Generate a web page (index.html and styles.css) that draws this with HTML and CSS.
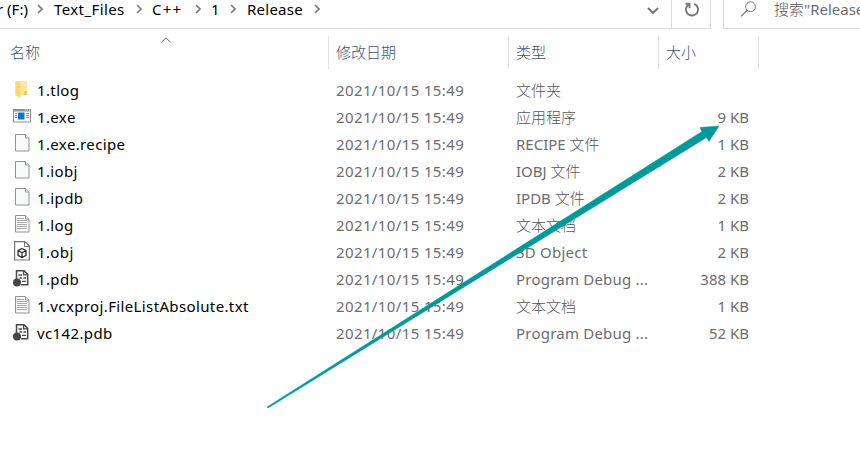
FILE: index.html
```
<!DOCTYPE html>
<html lang="zh-CN">
<head>
<meta charset="utf-8">
<title>Release</title>
<link rel="stylesheet" href="styles.css">
</head>
<body>
<svg class="defs" width="0" height="0">
  <symbol id="sep" viewBox="0 0 6 10"><path d="M1 1l4 4-4 4" fill="none" stroke="#7a7a7a" stroke-width="1.6"/></symbol>
  <symbol id="folder" viewBox="0 0 18 20"><path d="M2.500 2H11l3 1v13H2.500z" fill="#ffe79a"/><path d="M11 12.500h3V16h-3z" fill="#f0c75c"/><path d="M2.500 2l5 2v15l-5-2.500z" fill="#f9d875"/></symbol>
  <symbol id="exe" viewBox="0 0 18 20"><path d="M.5 3.500h17v12.500H.5z" fill="#fff" stroke="#8b8f92"/><path d="M0 3h18v2.500H0z" fill="#8b8f92"/><path d="M12 4h1m1 0h1m1 0h1" stroke="#fff"/><path d="M5 6.500h6.500v7H5z" fill="#0c74d4"/><path d="M2 7.500h2M2 9.500h2M2 11.500h2M13 7.500h3M13 9.500h3M13 11.500h3" stroke="#858b90"/></symbol>
  <symbol id="file" viewBox="0 0 18 20"><path d="M2.500 1.500h10l3.500 3.500v13H2.500z" fill="#f8f9f9" stroke="#929292"/><path d="M12.500 1.500V5H16" fill="#fff" stroke="#929292"/></symbol>
  <symbol id="text" viewBox="0 0 18 20"><path d="M2.500 1.500h10l3.500 3.500v13H2.500z" fill="#fafafa" stroke="#929292"/><path d="M12.500 1.500V5H16" fill="#fff" stroke="#929292"/><path d="M4 4.500h7M4 6.500h10M4 8.500h10M4 10.500h10M4 12.500h10M4 14.500h10" stroke="#aaa"/></symbol>
  <symbol id="obj" viewBox="0 0 18 20"><path d="M1.600.6h10.200L16.400 5v14H1.600z" fill="#fff" stroke="#757575" stroke-width="1.200"/><path d="M11.500.6V5.500h5" fill="none" stroke="#757575"/><path d="M9 7.500l4 2.200v4.600l-4 2.200-4-2.200V9.700zM5 9.700l4 2.100 4-2.100M9 11.800v4.700" fill="none" stroke="#303030" stroke-width="1.300"/></symbol>
  <symbol id="pdb" viewBox="0 0 18 20"><g transform="translate(0 1)"><path d="M3.500 10V1.700h7.500l3.700 3.700v10.400H8" fill="#fff" stroke="#484848" stroke-width="1.500"/><path d="M10.600 1.500v4.300h4" fill="none" stroke="#484848" stroke-width="1.300"/><path d="M5.500 6h3.500M6.500 9h2.500M10.500 9h2.500M9 12.300h4" stroke="#484848" stroke-width="1.300"/><circle cx="4" cy="13.500" r="4" fill="#454545"/></g></symbol>
</svg>

<header class="toolbar">
  <nav class="address">
    <span class="crumb drive">r (F:)</span><svg class="sep"><use href="#sep"/></svg>
    <span class="crumb folder">Text_Files</span><svg class="sep"><use href="#sep"/></svg>
    <span class="crumb lang">C++</span><svg class="sep"><use href="#sep"/></svg>
    <span class="crumb one">1</span><svg class="sep"><use href="#sep"/></svg>
    <span class="crumb release">Release</span><svg class="sep"><use href="#sep"/></svg>
    <svg class="drop" width="12" height="8" viewBox="0 0 12 8"><path d="M1 1l5 5 5-5" fill="none" stroke="#747474" stroke-width="1.900"/></svg>
  </nav>
  <div class="refresh"><svg width="16" height="16" viewBox="0 0 16 16"><path d="M10.300 1.800A6.100 6.100 0 1 1 4.500 2.500" fill="none" stroke="#757575" stroke-width="1.900"/><path d="M1.500 1.800h4v4.400" fill="none" stroke="#757575" stroke-width="1.900"/></svg></div>
  <div class="search"><svg width="17" height="16" viewBox="0 0 17 16"><circle cx="10.500" cy="5.700" r="4.900" fill="none" stroke="#777"/><path d="M7 9.300L1 15.300" stroke="#777" stroke-width="1.200"/></svg><span><span class="han">搜索</span>"Release"</span></div>
</header>

<div class="columns">
  <div class="col">名称<svg class="sort" width="10" height="6" viewBox="0 0 10 6"><path d="M.5 5.200L5 .8l4.500 4.400" fill="none" stroke="#666"/></svg></div>
  <div class="col">修改日期</div>
  <div class="col">类型</div>
  <div class="col">大小</div>
</div>

<main class="list">
  <div class="row"><svg class="icon"><use href="#folder"/></svg><span class="name">1.tlog</span><span class="date">2021/10/15 15:49</span><span class="type han">文件夹</span><span class="size"></span></div>
  <div class="row"><svg class="icon"><use href="#exe"/></svg><span class="name">1.exe</span><span class="date">2021/10/15 15:49</span><span class="type han">应用程序</span><span class="size">9 KB</span></div>
  <div class="row"><svg class="icon"><use href="#file"/></svg><span class="name">1.exe.recipe</span><span class="date">2021/10/15 15:49</span><span class="type">RECIPE <span class="han">文件</span></span><span class="size">1 KB</span></div>
  <div class="row"><svg class="icon"><use href="#file"/></svg><span class="name">1.iobj</span><span class="date">2021/10/15 15:49</span><span class="type">IOBJ <span class="han">文件</span></span><span class="size">2 KB</span></div>
  <div class="row"><svg class="icon"><use href="#file"/></svg><span class="name">1.ipdb</span><span class="date">2021/10/15 15:49</span><span class="type">IPDB <span class="han">文件</span></span><span class="size">2 KB</span></div>
  <div class="row"><svg class="icon"><use href="#text"/></svg><span class="name">1.log</span><span class="date">2021/10/15 15:49</span><span class="type han">文本文档</span><span class="size">1 KB</span></div>
  <div class="row"><svg class="icon"><use href="#obj"/></svg><span class="name">1.obj</span><span class="date">2021/10/15 15:49</span><span class="type latin">3D Object</span><span class="size">2 KB</span></div>
  <div class="row"><svg class="icon"><use href="#pdb"/></svg><span class="name">1.pdb</span><span class="date">2021/10/15 15:49</span><span class="type latin">Program Debug ...</span><span class="size">388 KB</span></div>
  <div class="row"><svg class="icon"><use href="#text"/></svg><span class="name">1.vcxproj.FileListAbsolute.txt</span><span class="date">2021/10/15 15:49</span><span class="type han">文本文档</span><span class="size">1 KB</span></div>
  <div class="row"><svg class="icon"><use href="#pdb"/></svg><span class="name">vc142.pdb</span><span class="date">2021/10/15 15:49</span><span class="type latin">Program Debug ...</span><span class="size">52 KB</span></div>
</main>

<svg class="arrow" width="860" height="453" viewBox="0 0 860 453"><path d="M267 407L702 131.500l-2-4 19-1.500-10 15.500-2.500-4L268 408z" fill="#009a9a" stroke="#009a9a" stroke-width=".5"/></svg>
</body>
</html>
```
FILE: styles.css
```
* { box-sizing: border-box; }
body {
  margin: 0;
  width: 860px;
  height: 453px;
  overflow: hidden;
  position: relative;
  background: #fff;
  color: #000;
  font: 15px/27px "Noto Sans", "Noto Sans CJK SC", sans-serif;
}
svg { display: block; flex: none; }
.defs { position: absolute; }
.han { color: #555; font-weight: 300; }

.toolbar { display: flex; height: 29px; }
.address {
  display: flex;
  align-items: center;
  width: 672px;
  padding-bottom: 9px;
  border-right: 1px solid #d9d9d9;
  border-bottom: 1px solid #d9d9d9;
}
.crumb { flex: none; margin-top: -1px; white-space: nowrap; line-height: 20px; letter-spacing: .25px; }
.drive { width: 40px; margin-left: -3px; letter-spacing: 0; }
.folder { width: 82px; margin-left: 11px; letter-spacing: .4px; }
.lang { width: 43px; margin-left: 10px; letter-spacing: 1.2px; }
.one { width: 19px; margin-left: 10px; }
.release { width: 67px; margin-left: 11px; }
.sep { width: 6px; height: 10px; margin-top: -2px; }
.drop { margin: 2px 12px 0 auto; }
.refresh {
  width: 39px;
  padding: 2px 0 0 12px;
  border-right: 1px solid #d9d9d9;
  border-bottom: 1px solid #d9d9d9;
}
.search {
  display: flex;
  flex: 1;
  gap: 17px;
  margin-left: 12px;
  padding: 1px 0 0 16px;
  overflow: hidden;
  border-left: 1px solid #d9d9d9;
  border-bottom: 1px solid #d9d9d9;
  color: #6d6d6d;
  line-height: 17px;
  white-space: nowrap;
}

.columns {
  display: grid;
  grid-template-columns: 329px 180px 150px 100px;
  height: 32px;
  margin-top: 7px;
  color: #3d5270;
  font-weight: 300;
  line-height: 33px;
}
.col { position: relative; padding-left: 7px; border-right: 1px solid #e2e2e2; }
.col:first-child { padding-left: 10px; }
.sort { position: absolute; left: 161px; top: 1px; }

.list { margin-top: 9px; }
.row {
  display: grid;
  grid-template-columns: 24px 299px 180px 150px 83px;
  height: 27px;
  padding-left: 13px;
  color: #6d6d6d;
  white-space: nowrap;
}
.icon { width: 18px; height: 20px; margin-top: 2px; }
.name { color: #000; letter-spacing: .37px; }
.date { letter-spacing: .38px; }
.latin { letter-spacing: .22px; }
.size { text-align: right; }
.arrow { position: absolute; left: 0; top: 0; }
```
